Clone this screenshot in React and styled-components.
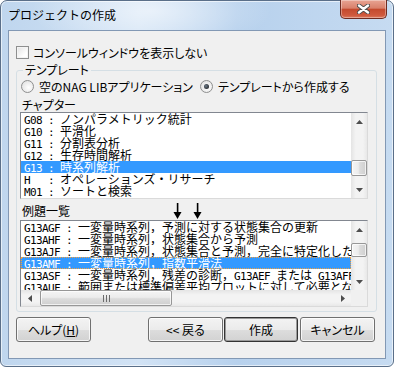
import React from "react";
import styled, { createGlobalStyle } from "styled-components";

const UI = `"Noto Sans CJK JP", "Liberation Sans", sans-serif`;

const GlobalStyle = createGlobalStyle`
  html, body { margin:0; padding:0; background:#ffffff; }
  body { font-family: ${UI}; }
`;

const Window = styled.div`
  width:394px;
  height:367px;
  box-sizing:border-box;
  border:1px solid #5a6f89;
  border-radius:7px 7px 6px 6px;
  background:
    radial-gradient(ellipse 120px 40px at 150px 10px, rgba(255,255,255,.55), rgba(255,255,255,0)),
    linear-gradient(to right, #bfd6ee 0%, #d2e3f5 35%, #b7d1ed 60%, #c6dbf1 100%);
  box-shadow: inset 0 0 0 1px rgba(255,255,255,.6);
  padding:0 7px 7px;
  display:flex;
  flex-direction:column;
`;

const TitleBar = styled.div`
  height:29px;
  display:flex;
  justify-content:space-between;
  align-items:flex-start;
`;

const Title = styled.div`
  font-size:12px;
  line-height:16px;
  padding-top:6px;
  color:#000;
`;

const CloseBtn = styled.div`
  width:47px;
  height:19px;
  box-sizing:border-box;
  margin:-1px -1px 0 0;
  border:1px solid #6e2c22;
  border-top:none;
  border-radius:0 0 5px 5px;
  background:linear-gradient(#e8a493 0%, #d9806b 45%, #c44a2e 52%, #cf5a3e 85%, #dc7a5e 100%);
  box-shadow: inset 0 0 0 1px rgba(255,255,255,.35);
  display:flex;
  align-items:center;
  justify-content:center;
`;

const Client = styled.div`
  flex:1;
  background:#f0f0f0;
  border:1px solid #8298b4;
  padding:15px 8px 0 7px;
  display:flex;
  flex-direction:column;
  font-size:12px;
  font-feature-settings:"palt";
  color:#000;
`;

const CheckRow = styled.label`
  display:flex;
  align-items:center;
  gap:4px;
  height:13px;
  line-height:13px;
`;

const Box = styled.span`
  width:13px;
  height:13px;
  box-sizing:border-box;
  border:1px solid #8e8f8f;
  background:linear-gradient(135deg, #e2e2e2, #ffffff 70%);
  box-shadow: inset 0 0 0 1px #f4f4f4;
`;

const Group = styled.fieldset`
  margin:4px 0 0;
  padding:0 8px 4px 3px;
  border:1px solid #d5dfe5;
  border-radius:3px;
  min-width:0;
`;

const Legend = styled.legend`
  padding:0 2px;
  margin-left:3px;
  line-height:14px;
`;

const RadioRow = styled.div`
  display:flex;
  align-items:center;
  height:13px;
  margin-top:3px;
`;

const Option = styled.label`
  display:flex;
  align-items:center;
  gap:5px;
  width:${p => p.$w}px;
  margin-left:${p => p.$ml || 0}px;
  white-space:nowrap;
`;

const Radio = styled.span`
  width:13px;
  height:13px;
  box-sizing:border-box;
  border-radius:50%;
  border:1px solid #8e8f8f;
  background:radial-gradient(circle at 60% 60%, #ffffff, #dcdcdc);
  display:flex;
  align-items:center;
  justify-content:center;
  &::after {
    content:"";
    width:5px;
    height:5px;
    border-radius:50%;
    background:${p => (p.$on ? "radial-gradient(circle at 40% 40%, #6d7b8a, #111)" : "transparent")};
  }
`;

const Caption = styled.div`
  padding-left:2px;
  line-height:${p => p.$lh || 12}px;
  margin-top:${p => p.$mt || 0}px;
  width:${p => (p.$w ? p.$w + "px" : "auto")};
  flex:none;
`;

const CaptionRow = styled.div`
  display:flex;
  align-items:flex-start;
  height:16px;
  margin-top:4px;
`;

const Arrow = styled.svg`
  margin-left:${p => p.$ml}px;
  flex:none;
`;

const ListBox = styled.div`
  height:${p => p.$h}px;
  margin-top:1px;
  box-sizing:border-box;
  border:1px solid;
  border-color:#828790 #dadada #dadada #828790;
  background:#fff;
  display:grid;
  grid-template-columns:1fr 16px;
  grid-template-rows:${p => (p.$hscroll ? "1fr 16px" : "1fr")};
  overflow:hidden;
`;

const Rows = styled.div`
  overflow:hidden;
  min-width:0;
`;

const Row = styled.div`
  height:12px;
  line-height:12px;
  padding-left:3px;
  white-space:pre;
  overflow:hidden;
  font-feature-settings:normal;
  color:${p => (p.$sel ? "#fff" : "#000")};
  background:${p => (p.$sel ? "#3399ff" : "transparent")};
  outline:${p => (p.$focus ? "1px dotted #f0a040" : "none")};
  outline-offset:-1px;
`;

const Half = styled.span`
  font-family:"DejaVu Sans Mono", "Liberation Mono", monospace;
  font-size:11px;
  letter-spacing:-0.62px;
`;

const VScroll = styled.div`
  display:flex;
  flex-direction:column;
  background:linear-gradient(to right, #e4e4e4, #f3f3f3 30%, #f3f3f3 75%, #e8e8e8);
`;

const HScroll = styled.div`
  display:flex;
  background:linear-gradient(#e4e4e4, #f3f3f3 30%, #f3f3f3 75%, #e8e8e8);
`;

const ScrollBtn = styled.div`
  flex:none;
  width:${p => (p.$h ? 17 : 16)}px;
  height:${p => (p.$h ? 16 : 17)}px;
  display:flex;
  align-items:center;
  justify-content:center;
`;

const Track = styled.div`
  flex:1;
  display:flex;
  flex-direction:${p => (p.$h ? "row" : "column")};
  padding-${p => (p.$h ? "left" : "top")}:${p => p.$offset}px;
`;

const Thumb = styled.div`
  box-sizing:border-box;
  flex:none;
  ${p => (p.$h ? `width:${p.$size}px; height:16px;` : `height:${p.$size}px; width:16px;`)}
  border:1px solid #979797;
  border-radius:2px;
  background:${p =>
    p.$h
      ? "linear-gradient(#f5f5f5, #ececec 45%, #dcdcdc 55%, #cfcfcf)"
      : "linear-gradient(to right, #f5f5f5, #ececec 45%, #dcdcdc 55%, #cfcfcf)"};
  box-shadow: inset 0 0 0 1px rgba(255,255,255,.7);
  display:flex;
  align-items:center;
  justify-content:center;
`;

const Grip = styled.div`
  width:7px;
  height:7px;
  background:repeating-linear-gradient(to right, #6c6c6c 0 1px, transparent 1px 3px);
`;

const Corner = styled.div`
  background:#f0f0f0;
`;

const ButtonRow = styled.div`
  display:flex;
  justify-content:space-between;
  margin:5px 2px 0 0;
`;

const ButtonGroup = styled.div`
  display:flex;
  gap:${p => p.$gap}px;
`;

const Btn = styled.div`
  width:${p => p.$w || 75}px;
  height:25px;
  box-sizing:border-box;
  margin-left:${p => p.$ml || 0}px;
  border:1px solid ${p => (p.$def ? "#333" : "#707070")};
  border-radius:3px;
  background:linear-gradient(#f3f3f3 0%, #ebebeb 50%, #dddddd 51%, #d2d2d2 100%);
  box-shadow:inset 0 0 0 1px ${p => (p.$def ? "#9a9a9a" : "rgba(255,255,255,.75)")};
  display:flex;
  align-items:center;
  justify-content:center;
  line-height:14px;
`;

const Tri = ({ dir }) => {
  const pts = {
    up: "0,4 3.5,0 7,4",
    down: "0,0 3.5,4 7,0",
    left: "4,0 0,3.5 4,7",
    right: "0,0 4,3.5 0,7",
  }[dir];
  const h = dir === "up" || dir === "down";
  return (
    <svg width={h ? 7 : 4} height={h ? 4 : 7}>
      <polygon points={pts} fill="#4d4d4d" />
    </svg>
  );
};

const Text = ({ text }) =>
  text.split(/([\x20-\x7e]+)/).map((s, i) =>
    /^[\x20-\x7e]+$/.test(s) ? <Half key={i}>{s}</Half> : s
  );

const VBar = ({ offset, size }) => (
  <VScroll>
    <ScrollBtn><Tri dir="up" /></ScrollBtn>
    <Track $offset={offset}>
      <Thumb $size={size} />
    </Track>
    <ScrollBtn><Tri dir="down" /></ScrollBtn>
  </VScroll>
);

const DownArrow = ({ ml }) => (
  <Arrow $ml={ml} width="9" height="16" viewBox="0 0 9 16">
    <rect x="3.8" y="0" width="1.6" height="10" fill="#000" />
    <polygon points="0.5,9 8.5,9 4.5,16" fill="#000" />
  </Arrow>
);

const chapters = [
  "G08 : ノンパラメトリック統計",
  "G10 : 平滑化",
  "G11 : 分割表分析",
  "G12 : 生存時間解析",
  "G13 : 時系列解析",
  "H   : オペレーションズ・リサーチ",
  "M01 : ソートと検索",
];

const examples = [
  "G13AGF : 一変量時系列，予測に対する状態集合の更新",
  "G13AHF : 一変量時系列，状態集合から予測",
  "G13AJF : 一変量時系列，状態集合と予測，完全に特定化したモデル",
  "G13AMF : 一変量時系列，指数平滑法",
  "G13ASF : 一変量時系列，残差の診断，G13AEF または G13AFF に適合したモデル",
  "G13AUF : 範囲または標準偏差平均プロットに対して必要となる量",
];

const App = () => (
  <>
    <GlobalStyle />
    <Window>
      <TitleBar>
        <Title>プロジェクトの作成</Title>
        <CloseBtn>
          <svg width="13" height="10" viewBox="0 0 13 10">
            <path d="M2 1.5 L11 8.5 M11 1.5 L2 8.5" stroke="#4a4a4a" strokeWidth="4.2" strokeLinecap="round" />
            <path d="M2 1.5 L11 8.5 M11 1.5 L2 8.5" stroke="#fff" strokeWidth="2.4" strokeLinecap="round" />
          </svg>
        </CloseBtn>
      </TitleBar>
      <Client>
        <CheckRow>
          <Box />
          コンソールウィンドウを表示しない
        </CheckRow>
        <Group>
          <Legend>テンプレート</Legend>
          <RadioRow>
            <Option $w={179} $ml={1}>
              <Radio />
              空のNAG LIBアプリケーション
            </Option>
            <Option $w={160}>
              <Radio $on />
              テンプレートから作成する
            </Option>
          </RadioRow>
          <Caption $mt={6}>チャプター</Caption>
          <ListBox $h={87}>
            <Rows>
              {chapters.map((c, i) => (
                <Row key={c} $sel={i === 4}>
                  <Text text={c} />
                </Row>
              ))}
            </Rows>
            <VBar offset={30} size={16} />
          </ListBox>
          <CaptionRow>
            <Caption $lh={16} $w={151}>例題一覧</Caption>
            <DownArrow ml={0} />
            <DownArrow ml={11} />
          </CaptionRow>
          <ListBox $h={87} $hscroll>
            <Rows>
              {examples.map((c, i) => (
                <Row key={c} $sel={i === 3} $focus={i === 3}>
                  <Text text={c} />
                </Row>
              ))}
            </Rows>
            <VBar offset={5} size={14} />
            <HScroll>
              <ScrollBtn $h><Tri dir="left" /></ScrollBtn>
              <Track $h $offset={2}>
                <Thumb $h $size={132}>
                  <Grip />
                </Thumb>
              </Track>
              <ScrollBtn $h><Tri dir="right" /></ScrollBtn>
            </HScroll>
            <Corner />
          </ListBox>
        </Group>
        <ButtonRow>
          <Btn>
            <span>ヘルプ(<u>H</u>)</span>
          </Btn>
          <ButtonGroup $gap={1}>
            <Btn>{"<< 戻る"}</Btn>
            <Btn $w={74} $def>作成</Btn>
            <Btn $ml={1}>キャンセル</Btn>
          </ButtonGroup>
        </ButtonRow>
      </Client>
    </Window>
  </>
);

export default App;
